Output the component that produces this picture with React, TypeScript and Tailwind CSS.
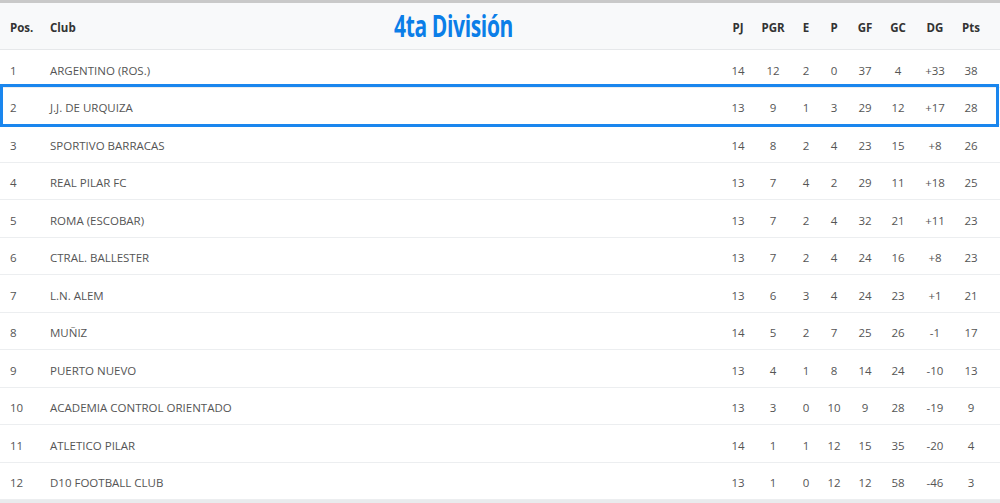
import React from "react";

interface Row {
  pos: number;
  club: string;
  pj: number;
  pgr: number;
  e: number;
  p: number;
  gf: number;
  gc: number;
  dg: string;
  pts: number;
}

const rows: Row[] = [
  { pos: 1, club: "ARGENTINO (ROS.)", pj: 14, pgr: 12, e: 2, p: 0, gf: 37, gc: 4, dg: "+33", pts: 38 },
  { pos: 2, club: "J.J. DE URQUIZA", pj: 13, pgr: 9, e: 1, p: 3, gf: 29, gc: 12, dg: "+17", pts: 28 },
  { pos: 3, club: "SPORTIVO BARRACAS", pj: 14, pgr: 8, e: 2, p: 4, gf: 23, gc: 15, dg: "+8", pts: 26 },
  { pos: 4, club: "REAL PILAR FC", pj: 13, pgr: 7, e: 4, p: 2, gf: 29, gc: 11, dg: "+18", pts: 25 },
  { pos: 5, club: "ROMA (ESCOBAR)", pj: 13, pgr: 7, e: 2, p: 4, gf: 32, gc: 21, dg: "+11", pts: 23 },
  { pos: 6, club: "CTRAL. BALLESTER", pj: 13, pgr: 7, e: 2, p: 4, gf: 24, gc: 16, dg: "+8", pts: 23 },
  { pos: 7, club: "L.N. ALEM", pj: 13, pgr: 6, e: 3, p: 4, gf: 24, gc: 23, dg: "+1", pts: 21 },
  { pos: 8, club: "MUÑIZ", pj: 14, pgr: 5, e: 2, p: 7, gf: 25, gc: 26, dg: "-1", pts: 17 },
  { pos: 9, club: "PUERTO NUEVO", pj: 13, pgr: 4, e: 1, p: 8, gf: 14, gc: 24, dg: "-10", pts: 13 },
  { pos: 10, club: "ACADEMIA CONTROL ORIENTADO", pj: 13, pgr: 3, e: 0, p: 10, gf: 9, gc: 28, dg: "-19", pts: 9 },
  { pos: 11, club: "ATLETICO PILAR", pj: 14, pgr: 1, e: 1, p: 12, gf: 15, gc: 35, dg: "-20", pts: 4 },
  { pos: 12, club: "D10 FOOTBALL CLUB", pj: 13, pgr: 1, e: 0, p: 12, gf: 12, gc: 58, dg: "-46", pts: 3 },
];

// stat columns: fixed widths, text centered
const cols = ["w-[36px]", "w-[34px]", "w-[32px]", "w-[24px]", "w-[38px]", "w-[28px]", "w-[46px]", "w-[26px]"];

export default function App() {
  return (
    <div className="w-[1000px] h-[503px] bg-white overflow-hidden text-[11.5px] font-['Open_Sans',sans-serif]">
      <div className="h-[3px] bg-[#c9c9c9]"></div>

      {/* Header */}
      <div className="flex items-center h-[47px] pt-[4px] bg-[#f8f9fa] border-b border-[#e6e8ea] text-[#333] font-bold">
        <div className="w-[50px] pl-[10px]">Pos.</div>
        <div className="flex-1 flex items-center">
          <span>Club</span>
          <span className="inline-block ml-[318px] origin-left scale-x-[0.7] text-[#0b7ee8] text-[30px] leading-none font-bold font-['Open_Sans',sans-serif] tracking-[-0.5px] -mt-[4px]">
            4ta División
          </span>
        </div>
        {["PJ", "PGR", "E", "P", "GF", "GC", "DG", "Pts"].map((h, i) => (
          <div key={h} className={`${cols[i]} text-center`}>{h}</div>
        ))}
        <div className="w-[16px]"></div>
      </div>

      {/* Body */}
      {rows.map((r) => (
        <div key={r.pos} className="relative flex items-center h-[37.5px] pt-[4px] border-b border-[#eceef0] text-[#555]">
          {r.pos === 2 && (
            <div className="absolute left-0 right-[1px] top-[-4px] bottom-[-3px] border-[3px] border-[#1a86ee]"></div>
          )}
          <div className="w-[50px] pl-[10px]">{r.pos}</div>
          <div className="flex-1">{r.club}</div>
          {[r.pj, r.pgr, r.e, r.p, r.gf, r.gc, r.dg, r.pts].map((v, i) => (
            <div key={i} className={`${cols[i]} text-center`}>{v}</div>
          ))}
          <div className="w-[16px]"></div>
        </div>
      ))}
      <div className="h-[3px] bg-[#e9ebed]"></div>
    </div>
  );
}
